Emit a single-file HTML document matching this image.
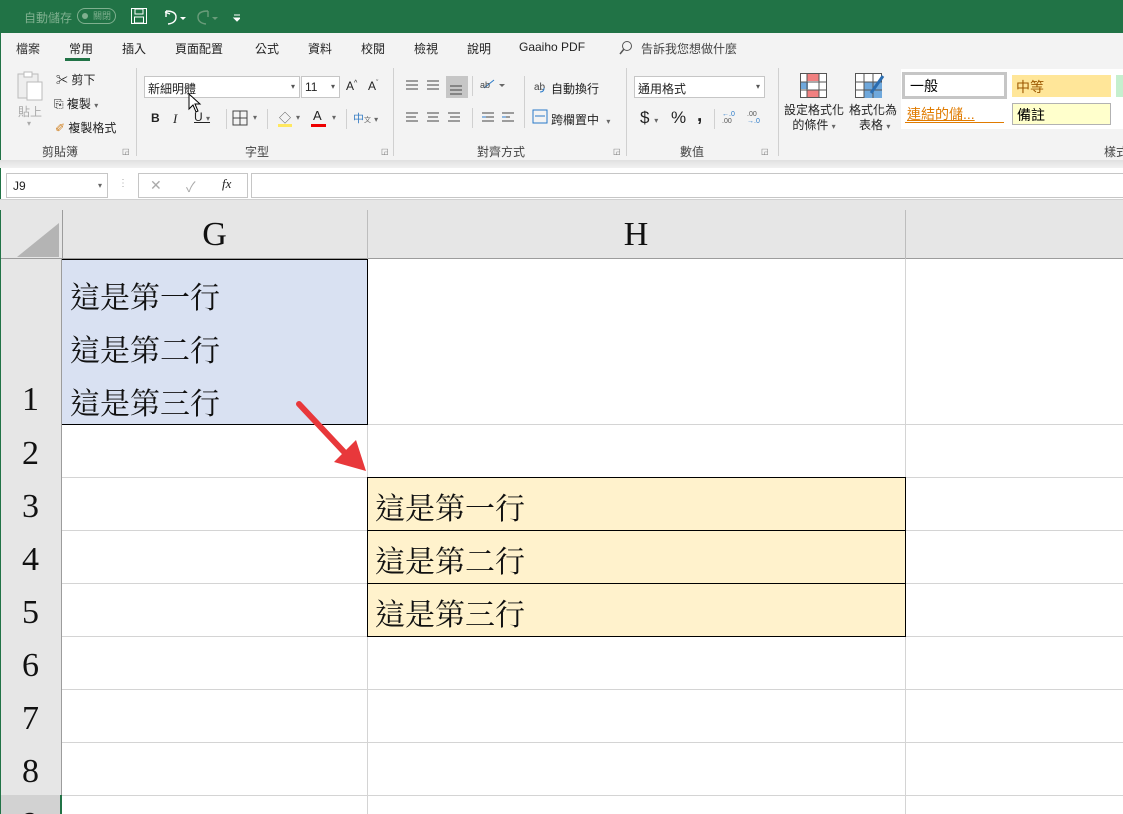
<!DOCTYPE html>
<html><head><meta charset="utf-8"><style>
*{margin:0;padding:0;box-sizing:border-box}
html,body{width:1123px;height:814px;overflow:hidden}
body{position:relative;background:#fff;font-family:"Liberation Sans","Noto Sans CJK TC",sans-serif;font-size:12px;color:#222}
.a{position:absolute;white-space:nowrap}
.ser{font-family:"Liberation Serif","Noto Serif CJK TC",serif}
.cell{font-family:"Liberation Serif","Noto Serif CJK TC",serif;font-size:30px;color:#111}
.hl{position:absolute;left:62px;width:1061px;height:1px;background:#d4d4d4}
.vl{position:absolute;top:259px;width:1px;height:555px;background:#d4d4d4}
.rh{position:absolute;left:0;width:62px;background:#e6e6e6;border-right:1px solid #9c9c9c;border-bottom:1px solid #bdbdbd;font-family:"Liberation Serif",serif;font-size:34px;text-align:center;color:#111;overflow:hidden}
.sep{position:absolute;width:1px;background:#d0d0d0}
.glab{position:absolute;top:143px;font-size:12px;color:#444}
</style></head><body>
<!-- title bar -->
<div class="a" style="left:0;top:0;width:1123px;height:33px;background:#217346"></div>
<div class="a" style="left:24px;top:9px;color:#7fb08f;font-size:12px">自動儲存</div>
<div class="a" style="left:77px;top:8px;width:39px;height:16px;border:1px solid #7fb08f;border-radius:8px;color:#7fb08f;font-size:9px;padding-left:15px;line-height:14px">關閉</div>
<div class="a" style="left:82px;top:13px;width:6px;height:6px;border-radius:3px;background:#7fb08f"></div>
<svg class="a" style="left:130px;top:7px" width="110" height="20"><rect x="1.5" y="1.5" width="15" height="15" fill="none" stroke="#fff"/><rect x="5" y="2" width="8" height="5" fill="none" stroke="#fff"/><rect x="4.5" y="10" width="9" height="6" fill="none" stroke="#fff"/><path d="M36 4 Q46 4 46 10 Q46 16 38 17 M36 4 L36 10 M35 5 L40 7" fill="none" stroke="#fff" stroke-width="1.4"/><path d="M50 10 l3 3 l3 -3z" fill="#fff"/><path d="M78 4 Q68 4 68 10 Q68 16 76 17 M78 4 L78 10" fill="none" stroke="#6a9c7a" stroke-width="1.4"/><path d="M82 10 l3 3 l3 -3z" fill="#6a9c7a"/><path d="M104 8 h6 M104 11 l3 3 l3 -3z" stroke="#fff" fill="#fff"/></svg>
<!-- tabs -->
<div class="a" style="left:0;top:33px;width:1123px;height:127px;background:#f3f3f3;border-left:1px solid #217346"></div>
<div class="a" style="left:16px;top:40px;font-size:12px;color:#333">檔案</div>
<div class="a" style="left:69px;top:40px">常用</div>
<div class="a" style="left:65px;top:58px;width:25px;height:3px;background:#217346"></div>
<div class="a" style="left:122px;top:40px">插入</div>
<div class="a" style="left:175px;top:40px">頁面配置</div>
<div class="a" style="left:255px;top:40px">公式</div>
<div class="a" style="left:308px;top:40px">資料</div>
<div class="a" style="left:361px;top:40px">校閱</div>
<div class="a" style="left:414px;top:40px">檢視</div>
<div class="a" style="left:467px;top:40px">說明</div>
<div class="a" style="left:519px;top:40px">Gaaiho PDF</div>
<svg class="a" style="left:618px;top:40px" width="16" height="16"><circle cx="9" cy="6" r="4.5" fill="none" stroke="#555"/><path d="M6 9 L2 14" stroke="#555" stroke-width="1.5"/></svg>
<div class="a" style="left:641px;top:40px;color:#444">告訴我您想做什麼</div>
<!-- clipboard -->
<svg class="a" style="left:16px;top:70px" width="30" height="32"><rect x="2" y="4" width="20" height="24" fill="#eee" stroke="#bbb"/><rect x="8" y="2" width="8" height="5" fill="#fff" stroke="#bbb"/><rect x="11" y="12" width="15" height="18" fill="#fff" stroke="#bbb"/></svg>
<div class="a" style="left:18px;top:103px;color:#aaa">貼上</div>
<div class="a" style="left:27px;top:119px;color:#aaa;font-size:8px">▾</div>
<div class="a" style="left:56px;top:71px">✂ 剪下</div>
<div class="a" style="left:54px;top:95px">⎘ 複製 <span style="font-size:8px;color:#666">▾</span></div>
<div class="a" style="left:55px;top:119px"><span style="color:#d08020">✐</span> 複製格式</div>
<div class="glab" style="left:42px">剪貼簿</div>
<div class="a" style="left:122px;top:147px;font-size:8px;color:#777">◲</div>
<div class="sep" style="left:136px;top:68px;height:88px"></div>
<!-- font -->
<div class="a" style="left:144px;top:76px;width:156px;height:22px;background:#fff;border:1px solid #c6c6c6;padding:3px 3px;font-size:12px">新細明體<span style="position:absolute;right:4px;font-size:8px;color:#555;top:5px">▾</span></div>
<div class="a" style="left:301px;top:76px;width:39px;height:22px;background:#fff;border:1px solid #c6c6c6;padding:3px 3px">11<span style="position:absolute;right:4px;font-size:8px;color:#555;top:5px">▾</span></div>
<svg class="a" style="left:188px;top:93px" width="14" height="22"><path d="M1 1 L1 16 L5 12 L8 19 L10 18 L7 11 L12 11 Z" fill="#fff" stroke="#000"/></svg>
<div class="a" style="left:346px;top:79px">A<sup style="font-size:7px">^</sup></div>
<div class="a" style="left:368px;top:79px">A<sup style="font-size:7px">ˇ</sup></div>
<div class="a" style="left:151px;top:111px;font-weight:bold">B</div>
<div class="a" style="left:173px;top:111px;font-style:italic;font-family:'Liberation Serif',serif;font-size:13px">I</div>
<div class="a" style="left:194px;top:110px;text-decoration:underline">U <span style="font-size:8px;color:#666">▾</span></div>
<div class="sep" style="left:226px;top:109px;height:20px"></div>
<svg class="a" style="left:232px;top:110px" width="16" height="16"><rect x="1" y="1" width="14" height="14" fill="none" stroke="#444"/><path d="M8 1V15M1 8H15" stroke="#444"/></svg>
<div class="a" style="left:253px;top:113px;font-size:8px;color:#666">▾</div>
<div class="sep" style="left:267px;top:109px;height:20px"></div>
<div class="a" style="left:279px;top:109px;color:#555">◇</div>
<div class="a" style="left:278px;top:124px;width:14px;height:3px;background:#ffe860"></div>
<div class="a" style="left:296px;top:113px;font-size:8px;color:#666">▾</div>
<div class="a" style="left:313px;top:108px;font-size:13px">A</div>
<div class="a" style="left:311px;top:124px;width:15px;height:3px;background:#e00"></div>
<div class="a" style="left:332px;top:113px;font-size:8px;color:#666">▾</div>
<div class="sep" style="left:346px;top:109px;height:20px"></div>
<div class="a" style="left:353px;top:110px;color:#3a7fc4;font-size:11px">中<span style="font-size:7px;color:#666">文</span> <span style="font-size:8px;color:#666">▾</span></div>
<div class="glab" style="left:245px">字型</div>
<div class="a" style="left:381px;top:147px;font-size:8px;color:#777">◲</div>
<div class="sep" style="left:393px;top:68px;height:88px"></div>
<!-- alignment -->
<svg class="a" style="left:402px;top:76px" width="225" height="52">
<g stroke="#444"><path d="M4 5h12M4 9h12M4 13h12"/><path d="M25 5h12M25 9h12M25 13h12"/><rect x="44" y="0" width="22" height="22" fill="#c6c6c6" stroke="none"/><path d="M48 10h12M48 14h12M48 18h12"/>
<path d="M4 37h12M4 41h10M4 45h12"/><path d="M25 37h12M26 41h10M25 45h12"/><path d="M46 37h12M48 41h10M46 45h12"/>
<path d="M80 37h12M84 41h8M80 45h12"/><path d="M100 37h12M100 41h8M100 45h12"/></g>
<path d="M80 41h4M100 41h4" stroke="#2a7ac8"/>
<path d="M82 12 L92 4" stroke="#2a7ac8"/><text x="78" y="12" font-size="9" fill="#444">ab</text><path d="M97 8 l3 3 l3-3z" fill="#666"/>
<text x="132" y="14" font-size="10" fill="#444">ab</text><path d="M138 16 q4 0 4 -4" stroke="#2a7ac8" fill="none"/>
<rect x="131" y="34" width="14" height="13" fill="none" stroke="#2a7ac8"/><path d="M133 40h10" stroke="#2a7ac8"/>
</svg>
<div class="sep" style="left:472px;top:76px;height:20px"></div>
<div class="sep" style="left:472px;top:108px;height:20px"></div>
<div class="sep" style="left:524px;top:76px;height:52px"></div>
<div class="a" style="left:551px;top:80px">自動換行</div>
<div class="a" style="left:551px;top:111px">跨欄置中 <span style="font-size:8px;color:#666;margin-left:4px">▾</span></div>
<div class="glab" style="left:477px">對齊方式</div>
<div class="a" style="left:613px;top:147px;font-size:8px;color:#777">◲</div>
<div class="sep" style="left:626px;top:68px;height:88px"></div>
<!-- number -->
<div class="a" style="left:634px;top:76px;width:131px;height:22px;background:#fff;border:1px solid #c6c6c6;padding:3px 3px">通用格式<span style="position:absolute;right:4px;font-size:8px;color:#555;top:5px">▾</span></div>
<div class="a" style="left:640px;top:108px;font-size:17px">$ <span style="font-size:8px;color:#666">▾</span></div>
<div class="a" style="left:671px;top:108px;font-size:17px">%</div>
<div class="a" style="left:697px;top:105px;font-size:19px;font-weight:bold">,</div>
<div class="sep" style="left:714px;top:109px;height:20px"></div>
<div class="a" style="left:722px;top:111px;font-size:7px;line-height:7px;color:#2a7ac8">←.0<br><span style="color:#555">.00</span></div>
<div class="a" style="left:747px;top:111px;font-size:7px;line-height:7px;color:#555">.00<br><span style="color:#2a7ac8">→.0</span></div>
<div class="glab" style="left:680px">數值</div>
<div class="a" style="left:761px;top:147px;font-size:8px;color:#777">◲</div>
<div class="sep" style="left:778px;top:68px;height:88px"></div>
<!-- styles -->
<svg class="a" style="left:800px;top:73px" width="100" height="30"><g stroke="#555" fill="#fff"><rect x="0.5" y="0.5" width="26" height="24"/></g><rect x="7" y="1" width="12" height="7" fill="#f08080"/><rect x="1" y="9" width="7" height="7" fill="#6fa8dc"/><rect x="7" y="17" width="12" height="7" fill="#f08080"/><path d="M7 1V25M19 1V25M1 9H27M1 17H27" stroke="#555"/>
<g transform="translate(55,0)"><rect x="0.5" y="0.5" width="26" height="24" fill="#fff" stroke="#555"/><rect x="9" y="9" width="18" height="16" fill="#6fa8dc"/><path d="M9 1V25M18 1V25M1 9H27M1 17H27" stroke="#555"/><path d="M28 3 L16 20" stroke="#2a6cb0" stroke-width="3"/></g></svg>
<div class="a" style="left:784px;top:103px;line-height:15px;text-align:center">設定格式化<br>的條件 <span style="font-size:8px;color:#666">▾</span></div>
<div class="a" style="left:849px;top:103px;line-height:15px;text-align:center">格式化為<br>&nbsp;表格 <span style="font-size:8px;color:#666">▾</span></div>
<div class="a" style="left:901px;top:69px;width:222px;height:60px;background:#fff"></div>
<div class="a" style="left:902px;top:72px;width:105px;height:27px;border:3px solid #c6c6c6;background:#fff;padding:1px 5px;font-size:14px;color:#000">一般</div>
<div class="a" style="left:1012px;top:75px;width:99px;height:22px;background:#ffe699;padding:2px 4px;font-size:14px;color:#9c5700">中等</div>
<div class="a" style="left:1116px;top:75px;width:7px;height:22px;background:#c6efce"></div>
<div class="a" style="left:907px;top:104px;font-size:14px;color:#e07b00;text-decoration:underline">連結的儲...</div>
<div class="a" style="left:905px;top:122px;width:99px;height:1px;background:#e07b00"></div>
<div class="a" style="left:1012px;top:103px;width:99px;height:22px;background:#ffffcc;border:1px solid #b2b2b2;padding:1px 4px;font-size:14px;color:#000">備註</div>
<div class="a" style="left:1104px;top:143px;color:#444">樣式</div>
<!-- ribbon shadow -->
<div class="a" style="left:0;top:160px;width:1123px;height:10px;background:linear-gradient(#e0e0e0,#f6f6f6)"></div>
<!-- formula bar -->
<div class="a" style="left:0;top:168px;width:1123px;height:32px;background:#fff;border-left:1px solid #217346"></div>
<div class="a" style="left:6px;top:173px;width:102px;height:25px;border:1px solid #c6c6c6;padding:5px 6px;font-size:12px">J9<span style="position:absolute;right:5px;font-size:8px;color:#666;top:7px">▾</span></div>
<div class="a" style="left:118px;top:178px;color:#aaa;font-size:10px">⋮</div>
<div class="a" style="left:138px;top:173px;width:110px;height:25px;border:1px solid #c6c6c6"></div>
<div class="a" style="left:150px;top:177px;color:#aaa;font-size:14px">✕</div>
<div class="a" style="left:186px;top:177px;color:#aaa;font-size:14px">✓</div>
<div class="a ser" style="left:222px;top:176px;font-style:italic;font-size:13px">fx</div>
<div class="a" style="left:251px;top:173px;width:872px;height:25px;border:1px solid #c6c6c6;border-right:none"></div>
<div class="a" style="left:0;top:199px;width:1123px;height:11px;background:#e6e6e6;border-top:1px solid #d0d0d0"></div>
<!-- column headers -->
<div class="a" style="left:0;top:210px;width:1123px;height:49px;background:#e6e6e6;border-bottom:1px solid #9c9c9c"></div>
<svg class="a" style="left:15px;top:222px" width="45" height="36"><path d="M44 1 L44 35 L2 35 Z" fill="#b4b4b4"/></svg>
<div class="a" style="left:62px;top:210px;width:1px;height:49px;background:#9c9c9c"></div>
<div class="a" style="left:367px;top:210px;width:1px;height:49px;background:#bdbdbd"></div>
<div class="a" style="left:905px;top:210px;width:1px;height:49px;background:#bdbdbd"></div>
<div class="a ser" style="left:62px;top:216px;width:305px;text-align:center;font-size:34px;color:#111">G</div>
<div class="a ser" style="left:367px;top:216px;width:538px;text-align:center;font-size:34px;color:#111">H</div>
<!-- grid lines -->
<div class="vl" style="left:367px"></div><div class="vl" style="left:905px"></div>
<div class="hl" style="top:424px"></div><div class="hl" style="top:477px"></div><div class="hl" style="top:530px"></div><div class="hl" style="top:583px"></div><div class="hl" style="top:636px"></div><div class="hl" style="top:689px"></div><div class="hl" style="top:742px"></div><div class="hl" style="top:795px"></div>
<!-- row headers -->
<div class="rh" style="top:259px;height:166px;padding-top:122px">1</div>
<div class="rh" style="top:424px;height:54px;padding-top:11px">2</div>
<div class="rh" style="top:477px;height:54px;padding-top:11px">3</div>
<div class="rh" style="top:530px;height:54px;padding-top:11px">4</div>
<div class="rh" style="top:583px;height:54px;padding-top:11px">5</div>
<div class="rh" style="top:636px;height:54px;padding-top:11px">6</div>
<div class="rh" style="top:689px;height:54px;padding-top:11px">7</div>
<div class="rh" style="top:742px;height:54px;padding-top:11px">8</div>
<div class="rh" style="top:795px;height:19px;padding-top:11px;background:#d2d2d2;border-right:2px solid #217346;border-bottom:none">9</div>
<div class="a" style="left:0;top:210px;width:1px;height:604px;background:#217346"></div>
<!-- G1 -->
<div class="a" style="left:62px;top:259px;width:306px;height:166px;background:#d9e1f2;border:1px solid #000;border-left:none"></div>
<div class="a cell" style="left:70px;top:272px;line-height:53px">這是第一行<br>這是第二行<br>這是第三行</div>
<!-- H3-5 -->
<div class="a" style="left:367px;top:477px;width:539px;height:160px;background:#fff2cc;border:1px solid #000"></div>
<div class="a" style="left:367px;top:530px;width:539px;height:1px;background:#000"></div>
<div class="a" style="left:367px;top:583px;width:539px;height:1px;background:#000"></div>
<div class="a cell" style="left:375px;top:483px;line-height:53px">這是第一行<br>這是第二行<br>這是第三行</div>
<!-- arrow -->
<svg class="a" style="left:290px;top:395px" width="80" height="80"><path d="M9 9 L55 58" stroke="#e8383b" stroke-width="6" stroke-linecap="round"/><path d="M44 67 L76 76 L66 45 Z" fill="#e8383b"/></svg>
</body></html>
